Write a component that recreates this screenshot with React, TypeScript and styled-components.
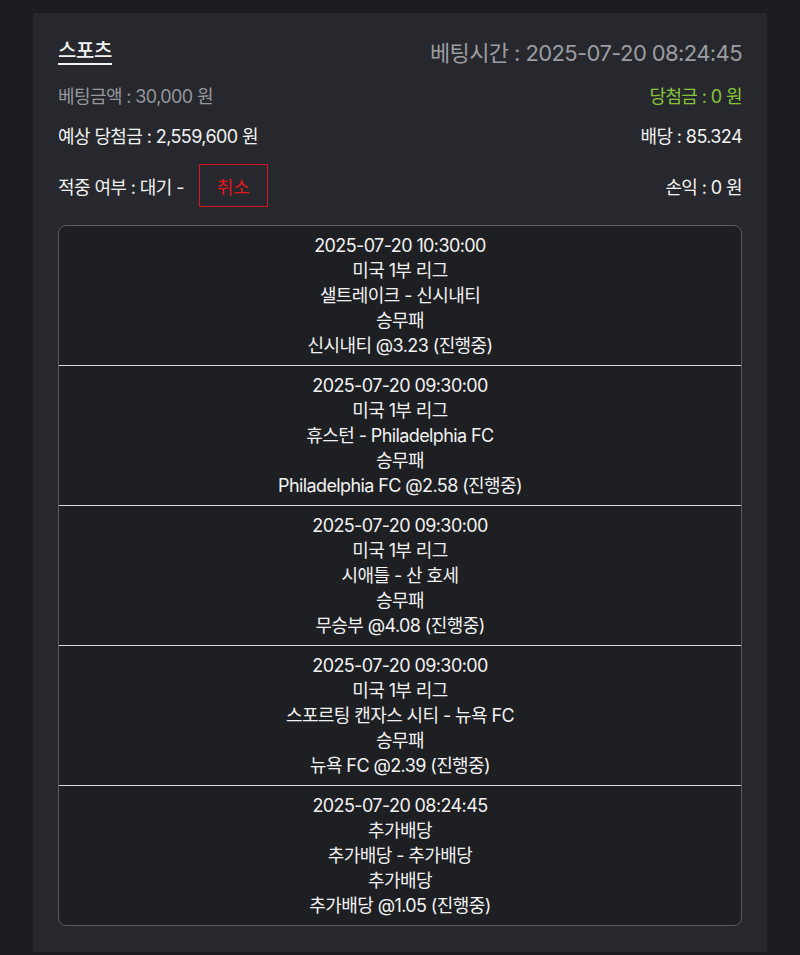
import styled, { createGlobalStyle } from "styled-components";

const GlobalStyle = createGlobalStyle`
    body {
        margin: 0;
        background: #1c1d21;
        font-family: "Inter", "Noto Sans CJK KR", sans-serif;
        color: #f2f2f2;
    }
`;

const Panel = styled.div`
    margin: 13px 33px 5px;
    padding: 20px 25px 26px;
    background: #27282d;
`;

const Row = styled.div<{ $mt?: number; $h: number }>`
    display: flex;
    justify-content: space-between;
    align-items: center;
    height: ${(p) => p.$h}px;
    margin-top: ${(p) => p.$mt || 0}px;
`;

const Title = styled.span`
    font-size: 20px;
    font-weight: 500;
    text-decoration: underline;
    text-underline-offset: 5px;
    letter-spacing: -0.4px;
    margin-top: -3px;
`;

const Text = styled.span<{ $color?: string; $size?: number }>`
    font-size: ${(p) => p.$size || 18}px;
    color: ${(p) => p.$color || "#f2f2f2"};
    letter-spacing: -0.6px;
`;

const Left = styled.div`
    display: flex;
    align-items: center;
`;

const CancelButton = styled.button`
    margin-left: 15px;
    width: 69px;
    height: 43px;
    background: transparent;
    border: 1.5px solid #d81420;
    color: #e3161f;
    font-family: inherit;
    font-size: 18px;
    cursor: pointer;
`;

const Table = styled.div`
    margin-top: 18px;
    background: #1e1f23;
    border: 1px solid #5a5b61;
    border-radius: 8px;
    overflow: hidden;
`;

const Item = styled.div`
    padding: 7px 0 7px;
    text-align: center;
    font-size: 18px;
    line-height: 25px;
    letter-spacing: -0.6px;
    color: #f2f2f2;
    & + & {
        border-top: 1px solid #d8d8d8;
    }
`;

const items = [
    ["2025-07-20 10:30:00", "미국 1부 리그", "샐트레이크 - 신시내티", "승무패", "신시내티 @3.23 (진행중)"],
    ["2025-07-20 09:30:00", "미국 1부 리그", "휴스턴 - Philadelphia FC", "승무패", "Philadelphia FC @2.58 (진행중)"],
    ["2025-07-20 09:30:00", "미국 1부 리그", "시애틀 - 산 호세", "승무패", "무승부 @4.08 (진행중)"],
    ["2025-07-20 09:30:00", "미국 1부 리그", "스포르팅 캔자스 시티 - 뉴욕 FC", "승무패", "뉴욕 FC @2.39 (진행중)"],
    ["2025-07-20 08:24:45", "추가배당", "추가배당 - 추가배당", "추가배당", "추가배당 @1.05 (진행중)"],
];

function App(): JSX.Element {
    return (
        <>
            <GlobalStyle />
            <Panel>
                <Row $h={36}>
                    <Title>스포츠</Title>
                    <Text $size={22} $color="#9c9da2">베팅시간 : 2025-07-20 08:24:45</Text>
                </Row>
                <Row $h={26} $mt={13}>
                    <Text $color="#96979c">베팅금액 : 30,000 원</Text>
                    <Text $color="#86c43a">당첨금 : 0 원</Text>
                </Row>
                <Row $h={26} $mt={14}>
                    <Text>예상 당첨금 : 2,559,600 원</Text>
                    <Text>배당 : 85.324</Text>
                </Row>
                <Row $h={43} $mt={16}>
                    <Left>
                        <Text>적중 여부 : 대기 -</Text>
                        <CancelButton>취소</CancelButton>
                    </Left>
                    <Text>손익 : 0 원</Text>
                </Row>
                <Table>
                    {items.map((lines, i) => (
                        <Item key={i}>
                            {lines.map((l, j) => (
                                <div key={j}>{l}</div>
                            ))}
                        </Item>
                    ))}
                </Table>
            </Panel>
        </>
    );
}

export default App;
